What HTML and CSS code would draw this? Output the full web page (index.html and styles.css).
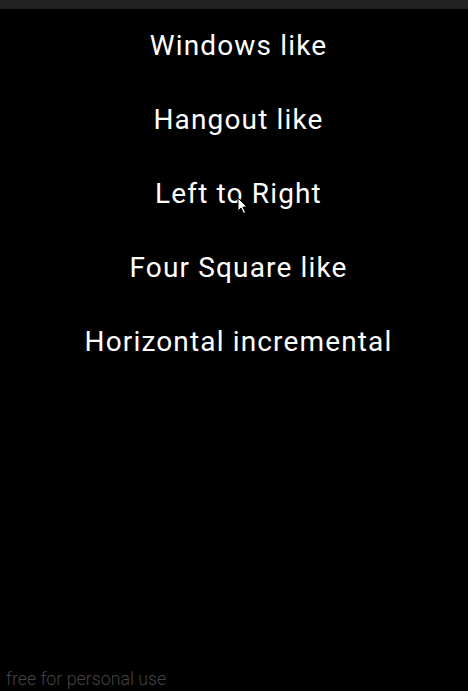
FILE: index.html
```html
<!DOCTYPE html>
<html>
<head>
<meta charset="utf-8">
<link rel="stylesheet" href="styles.css">
</head>
<body>
<div class="screen">
  <div class="statusbar"></div>
  <ul class="menu">
    <li>Windows like</li>
    <li>Hangout like</li>
    <li class="has-cursor">Left to Right
      <svg class="cursor" width="12" height="18" viewBox="0 0 12 18"><path d="M1 1 L1 14 L4 11 L6.5 16.5 L8.5 15.5 L6 10 L10 10 Z" fill="#fff" stroke="#000" stroke-width="1"/></svg>
    </li>
    <li>Four Square like</li>
    <li>Horizontal incremental</li>
  </ul>
  <div class="footer">free for personal use</div>
</div>
</body>
</html>
```
FILE: styles.css
```css
html, body {
  margin: 0;
  padding: 0;
  background: #000;
}
.screen {
  width: 468px;
  height: 691px;
  display: flex;
  flex-direction: column;
  background: #000;
  font-family: Roboto, "Noto Sans", sans-serif;
}
.statusbar {
  height: 9px;
  background: #222;
}
.menu {
  list-style: none;
  margin: 0;
  padding: 18px 0 0 9px;
  flex: 1;
}
.menu li {
  height: 74px;
  line-height: 38px;
  text-align: center;
  color: #fff;
  font-size: 28px;
  letter-spacing: 1.15px;
  position: relative;
}
.cursor {
  position: absolute;
  left: 228px;
  top: 22px;
}
.footer {
  color: #444;
  font-size: 17.8px;
  font-weight: 300;
  padding: 0 0 0 6px;
  line-height: 24px;
}
```
